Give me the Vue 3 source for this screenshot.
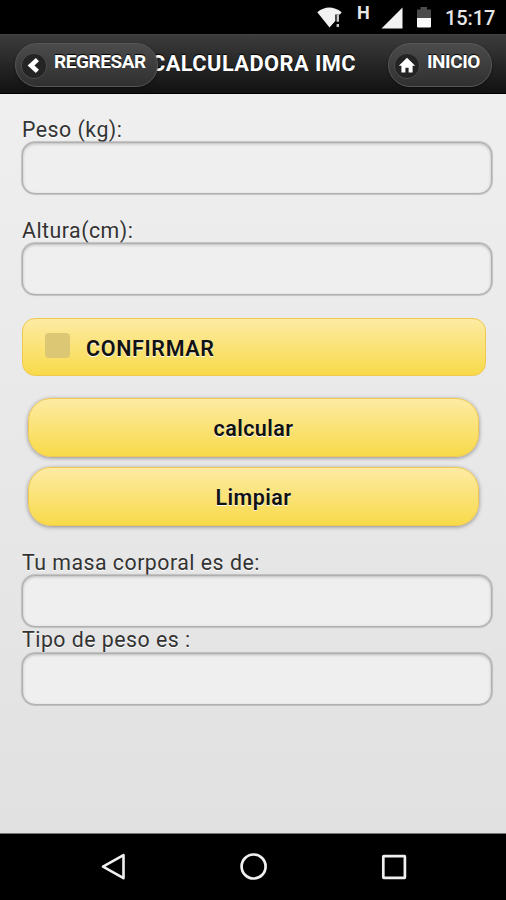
<script setup>
import { ref } from 'vue'

const peso = ref('')
const altura = ref('')
const masa = ref('')
const tipo = ref('')
const confirmado = ref(false)

function limpiar() {
  peso.value = altura.value = masa.value = tipo.value = ''
}

function calcular() {
  if (!confirmado.value) return
  const imc = Number(peso.value) / (Number(altura.value) / 100) ** 2
  if (!Number.isFinite(imc)) return
  masa.value = imc.toFixed(2)
  tipo.value = imc < 18.5 ? 'Bajo' : imc < 25 ? 'Normal' : 'Sobrepeso'
}
</script>

<template>
  <div class="screen">
    <div class="status">
      <svg class="wifi" width="26" height="22" viewBox="0 0 26 22">
        <path d="M0.3 5.2 Q12 -4 24.7 5.2 L23 7.5 L18.3 7.5 L18.3 14 L12.5 20.5 Z" fill="#f2f2f2" />
        <path d="M20.8 7.5 V14.8 M20.8 17 V20" stroke="#c8c8c8" stroke-width="2.4" />
      </svg>
      <span class="net">H</span>
      <svg class="signal" width="22" height="22" viewBox="0 0 22 22">
        <path d="M21.5 0.5 V21.5 H0.5 Z" fill="#f2f2f2" />
      </svg>
      <svg class="battery" width="16" height="22" viewBox="0 0 16 22">
        <path d="M1 11 V2.5 H4.5 V0 H11 V2.5 H15 V11 Z" fill="#4b4b4b" />
        <path d="M1 11 H15 V19.5 Q15 20.5 14 20.5 H2 Q1 20.5 1 19.5 Z" fill="#fafafa" />
      </svg>
      <span class="clock">15:17</span>
    </div>

    <header class="bar">
      <h1 class="title">CALCULADORA IMC</h1>
      <button class="nav back">
        <svg class="disc" width="28" height="28" viewBox="0 0 28 28">
          <circle cx="14" cy="14" r="12.6" fill="#242424" stroke="#4c4c4c" />
          <path d="M17.4 7.6 L11 13.5 L17.4 19.4" fill="none" stroke="#fff" stroke-width="4.6" />
        </svg>
        <span class="nav-text">REGRESAR</span>
      </button>
      <button class="nav home">
        <svg class="disc" width="28" height="28" viewBox="0 0 28 28">
          <circle cx="14" cy="14" r="12.6" fill="#242424" stroke="#4c4c4c" />
          <path d="M14 5.8 L22.2 13.8 H19.6 V20.4 H15.6 V15.8 H12.4 V20.4 H8.4 V13.8 H5.8 Z" fill="#fff" />
        </svg>
        <span class="nav-text">INICIO</span>
      </button>
    </header>

    <main class="content">
      <label class="label peso" for="peso"><span>Peso (kg):</span></label>
      <input id="peso" v-model="peso" class="field" />
      <label class="label altura" for="altura"><span>Altura(cm):</span></label>
      <input id="altura" v-model="altura" class="field" />

      <button class="confirm" @click="confirmado = !confirmado">
        <span class="check" :class="{ on: confirmado }"></span>
        <span class="confirm-text">CONFIRMAR</span>
      </button>
      <button class="action calc" @click="calcular"><span>calcular</span></button>
      <button class="action clear" @click="limpiar"><span>Limpiar</span></button>

      <label class="label masa" for="masa"><span>Tu masa corporal es de:</span></label>
      <input id="masa" v-model="masa" class="field" />
      <label class="label tipo" for="tipo"><span>Tipo de peso es :</span></label>
      <input id="tipo" v-model="tipo" class="field" />
    </main>

    <nav class="system">
      <svg width="26" height="28" viewBox="0 0 26 28">
        <path d="M2 13.7 L22.5 2.2 V25.2 Z" fill="none" stroke="#f0f0f0" stroke-width="2.6" stroke-linejoin="round" />
      </svg>
      <svg width="28" height="28" viewBox="0 0 28 28">
        <circle cx="13.6" cy="13.5" r="12" fill="none" stroke="#f0f0f0" stroke-width="2.7" />
      </svg>
      <svg width="26" height="28" viewBox="0 0 26 28">
        <rect x="2.3" y="3.2" width="21.6" height="21.6" rx="0.5" fill="none" stroke="#f0f0f0" stroke-width="2.7" />
      </svg>
    </nav>
  </div>
</template>

<style>
body {
  margin: 0;
}
</style>

<style scoped>
.screen {
  display: flex;
  flex-direction: column;
  width: 506px;
  height: 900px;
  overflow: hidden;
  background: #000;
  font-family: Roboto, sans-serif;
}

button,
input {
  box-sizing: border-box;
  margin: 0;
  padding: 0;
  font-family: inherit;
}

svg {
  display: block;
  flex: none;
}

.status {
  display: flex;
  align-items: flex-start;
  flex: none;
  box-sizing: border-box;
  height: 34px;
  padding: 7px 0 0 317px;
  color: #e6e6e6;
}

.net {
  width: 14px;
  margin: -4px 0 0 14px;
  font-size: 18px;
  font-weight: 700;
  line-height: 20px;
}

.signal {
  margin-left: 10px;
}

.battery {
  margin-left: 13px;
}

.clock {
  margin-left: 13px;
  font-size: 20px;
  font-weight: 500;
  line-height: 23px;
  letter-spacing: -0.1px;
  white-space: nowrap;
}

.bar {
  display: grid;
  grid-template-columns: 143px 1fr 104px;
  align-items: start;
  flex: none;
  box-sizing: border-box;
  height: 60px;
  padding: 8px 14px 0 15px;
  border-top: 1px solid #414141;
  border-bottom: 1px solid #000;
  background: linear-gradient(#3c3c3c, #111);
}

.title {
  grid-area: 1 / 1 / 2 / 4;
  margin: 0;
  color: #fff;
  font-size: 21.8px;
  font-weight: 700;
  line-height: 41px;
  letter-spacing: 0.45px;
  text-align: center;
  text-shadow: 0 -1px 1px #000;
  white-space: nowrap;
}

.nav {
  display: flex;
  align-items: flex-start;
  height: 44px;
  border: 1px solid #565656;
  border-radius: 22px;
  background: linear-gradient(#4b4b4b, #303030);
  box-shadow: 0 1px 3px rgba(0, 0, 0, 0.35);
  color: #fff;
}

.back {
  grid-area: 1 / 1;
}

.home {
  grid-area: 1 / 3;
}

.disc {
  margin: 8px 0 0 4px;
}

.nav-text {
  margin-left: 6px;
  font-size: 19px;
  font-weight: 700;
  line-height: 36px;
  letter-spacing: -0.45px;
  text-shadow: 0 -1px 1px #000;
  white-space: nowrap;
}

.content {
  display: flex;
  flex-direction: column;
  flex: none;
  box-sizing: border-box;
  height: 740px;
  padding: 24px 14px 0 22px;
  border-bottom: 1px solid #777;
  background: linear-gradient(#efefef, #e1e1e1);
}

.label {
  display: flex;
  height: 24px;
  color: #333;
  font-size: 21.3px;
  line-height: 24px;
  letter-spacing: 0.5px;
  text-shadow: 0 1px 0 #fff;
  white-space: nowrap;
}

.altura {
  margin-top: 25px;
}

.field {
  width: 470px;
  height: 52px;
  padding: 0 10px;
  border: 1px solid #b0b0b0;
  border-radius: 13px;
  outline: none;
  background: #efefef;
  box-shadow: inset 0 1px 3px rgba(0, 0, 0, 0.22), 0 0 0 0.5px #b8b8b8, 0 0 1px 1px rgba(0, 0, 0, 0.12);
  color: #333;
  font-size: 21px;
}

.confirm,
.action {
  flex: none;
  border: 1px solid #f1c84f;
  background: linear-gradient(#fdeba4, #f8da49);
  color: #111;
  font-size: 21.5px;
  font-weight: 600;
  letter-spacing: 0.45px;
  text-shadow: 0 1px 0 #fff;
}

.confirm {
  display: flex;
  align-items: center;
  width: 464px;
  height: 58px;
  margin-top: 23px;
  padding-left: 22px;
  border-radius: 13px;
}

.check {
  width: 25px;
  height: 25px;
  margin-bottom: 3px;
  border-radius: 4px;
  background: #dcc775;
}

.check.on {
  background: #8d7420;
}

.confirm-text {
  margin: 3px 0 0 16px;
  letter-spacing: 0.65px;
}

.action {
  width: 451px;
  height: 59px;
  margin-left: 6px;
  padding-top: 2px;
  border-radius: 23px;
  box-shadow: 0 1px 4px rgba(0, 0, 0, 0.4);
}

.calc {
  margin-top: 22px;
}

.clear {
  margin-top: 10px;
}

.masa {
  margin-top: 25px;
}

.tipo {
  height: 25px;
  margin-top: 1px;
}

.system {
  display: flex;
  justify-content: space-between;
  align-items: center;
  flex: 1;
  padding: 0 99px 0 101px;
  background: #000;
}
</style>
